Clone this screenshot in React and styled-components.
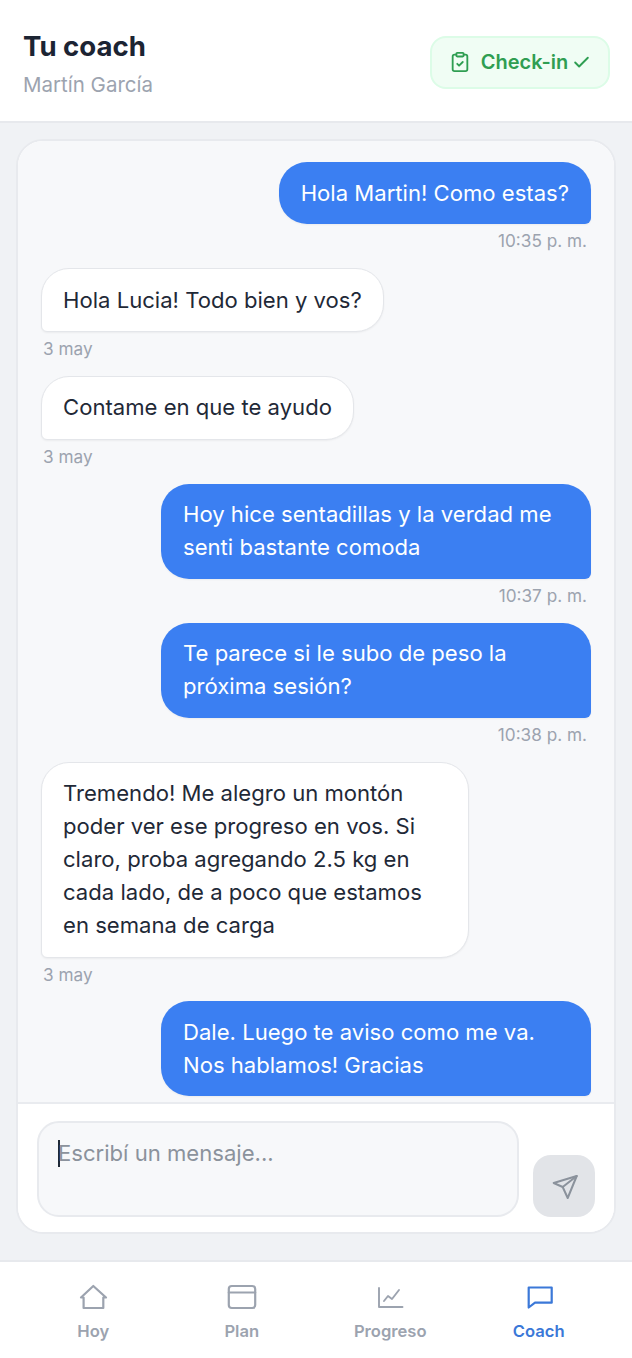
import React from "react";
import styled, { createGlobalStyle } from "styled-components";
import { ClipboardCheck, Check } from "lucide-react";

const GlobalStyle = createGlobalStyle`
  html, body { margin: 0; padding: 0; }
  body { font-family: Inter, "Liberation Sans", sans-serif; background: #f0f2f5; }
  * { box-sizing: border-box; }
`;

const Screen = styled.div`
  width: 632px;
  height: 1358px;
  display: flex;
  flex-direction: column;
  background: #f0f2f5;
`;

const Header = styled.header`
  height: 123px;
  flex: none;
  display: flex;
  align-items: center;
  justify-content: space-between;
  padding: 0 22px 0 23px;
  background: #fff;
  border-bottom: 2px solid #e7e9ed;
`;

const Heading = styled.div`
  padding-top: 6px;
`;

const Title = styled.h1`
  margin: 0;
  font-size: 27.6px;
  line-height: 36px;
  font-weight: 700;
  color: #1c2433;
`;

const Subtitle = styled.div`
  margin-top: 7px;
  font-size: 20.5px;
  line-height: 28px;
  color: #9ca3af;
`;

const CheckIn = styled.button`
  width: 180px;
  height: 53px;
  display: flex;
  align-items: center;
  justify-content: center;
  gap: 10px;
  margin-top: 4px;
  padding: 0 0 1px;
  font: 600 20px Inter, sans-serif;
  color: #2f9e52;
  background: #f0fdf4;
  border: 2px solid #dcfce7;
  border-radius: 16px;

  span {
    display: flex;
    align-items: center;
    gap: 4px;
  }
`;

const Main = styled.main`
  flex: 1;
  min-height: 0;
  padding: 16px 16px 26px;
  display: flex;
`;

const Card = styled.section`
  flex: 1;
  display: flex;
  flex-direction: column;
  overflow: hidden;
  background: #fff;
  border: 2px solid #e8eaee;
  border-radius: 27px;
`;

const Messages = styled.div`
  flex: 1;
  min-height: 0;
  overflow: hidden;
  display: flex;
  flex-direction: column;
  padding: 21.3px 23px 0;
  background: #f7f8fa;
  border-bottom: 2px solid #e9ebef;
`;

const Row = styled.div`
  display: flex;
  flex-direction: column;
  flex: none;
  align-items: ${(p) => (p.$mine ? "flex-end" : "flex-start")};
  margin-bottom: 15.85px;
`;

const Bubble = styled.div`
  max-width: ${(p) => (p.$mine ? "430px" : "428px")};
  padding: ${(p) => (p.$mine ? "14.5px 22px" : "14.5px 21px")};
  font-size: 22.1px;
  line-height: 33px;
  border-radius: ${(p) => (p.$mine ? "28px 28px 6px 28px" : "28px 28px 28px 6px")};
  color: ${(p) => (p.$mine ? "#fff" : "#1f2937")};
  background: ${(p) => (p.$mine ? "#3b7ff2" : "#fff")};
  border: ${(p) => (p.$mine ? "none" : "1px solid #e4e6ea")};
  box-shadow: 0 1px 2px rgba(0, 0, 0, 0.05);
`;

const Time = styled.div`
  margin-top: 6px;
  padding: 0 4px 0 2px;
  font-size: 17.2px;
  line-height: 22px;
  color: #9ca3af;
`;

const Composer = styled.form`
  flex: none;
  height: 128px;
  display: flex;
  align-items: flex-end;
  gap: 14px;
  margin: 0;
  padding: 16px 19px 15px 19px;
  background: #fff;
`;

const InputBox = styled.div`
  flex: 1;
  height: 96px;
  padding: 14px 19px;
  display: flex;
  align-items: flex-start;
  font-size: 22.1px;
  line-height: 33px;
  color: #8b929c;
  background: #f7f8fa;
  border: 2px solid #e8eaee;
  border-radius: 22px;
`;

const Caret = styled.i`
  width: 2px;
  height: 27px;
  margin-top: 3px;
  margin-right: -2px;
  background: #1f2937;
`;

const SendButton = styled.button`
  width: 62px;
  height: 62px;
  flex: none;
  display: flex;
  align-items: center;
  justify-content: center;
  padding: 0;
  color: #8b929c;
  background: #e2e4e8;
  border: none;
  border-radius: 18px;
`;

const Nav = styled.nav`
  flex: none;
  height: 98px;
  display: grid;
  grid-template-columns: repeat(4, 1fr);
  padding: 0 19px;
  background: #fff;
  border-top: 2px solid #e7e9ed;
`;

const NavItem = styled.div`
  display: flex;
  flex-direction: column;
  align-items: center;
  padding-top: 19px;
  gap: 7px;
  font-size: 16.6px;
  line-height: 22px;
  font-weight: 600;
  color: ${(p) => (p.$active ? "#3b78d8" : "#9ca3af")};
`;

const Glyph = ({ size = 32, width = 2.2, children }) => (
  <svg
    width={size}
    height={size}
    viewBox={`0 0 ${size} ${size}`}
    fill="none"
    stroke="currentColor"
    strokeWidth={width}
    strokeLinejoin="round"
    strokeLinecap="round"
  >
    {children}
  </svg>
);

const HomeIcon = () => (
  <Glyph>
    <path d="M4 16.5 16.3 5 29 16.5h-2.7V27H6.6V16.5Z" />
  </Glyph>
);

const PlanIcon = () => (
  <Glyph>
    <rect x="2.8" y="5" width="26.4" height="22" rx="3" />
    <path d="M2.8 11.5h26.4" />
  </Glyph>
);

const ProgressIcon = () => (
  <Glyph width={1.9}>
    <path d="M5 7v19h23.5" />
    <path d="M10 20l4-5 4 3 7-9" />
  </Glyph>
);

const CoachIcon = () => (
  <Glyph>
    <path d="M5.7 6.5h23v15.2H12L5.7 26.5Z" />
  </Glyph>
);

const SendIcon = () => (
  <Glyph size={27} width={2}>
    <path d="M25.7 3 2.7 10l9 4 5 11Z" />
    <path d="M25.7 3 11.7 14" />
  </Glyph>
);

const chat = [
  { mine: true, text: "Hola Martin! Como estas?", time: "10:35 p. m." },
  { text: "Hola Lucia! Todo bien y vos?", time: "3 may" },
  { text: "Contame en que te ayudo", time: "3 may" },
  { mine: true, text: "Hoy hice sentadillas y la verdad me senti bastante comoda", time: "10:37 p. m." },
  { mine: true, text: "Te parece si le subo de peso la próxima sesión?", time: "10:38 p. m." },
  { text: "Tremendo! Me alegro un montón poder ver ese progreso en vos. Si claro, proba agregando 2.5 kg en cada lado, de a poco que estamos en semana de carga", time: "3 may" },
  { mine: true, text: "Dale. Luego te aviso como me va. Nos hablamos! Gracias" },
];

const tabs = [
  { label: "Hoy", Icon: HomeIcon },
  { label: "Plan", Icon: PlanIcon },
  { label: "Progreso", Icon: ProgressIcon },
  { label: "Coach", Icon: CoachIcon, active: true },
];

export default function App() {
  return (
    <Screen>
      <GlobalStyle />
      <Header>
        <Heading>
          <Title>Tu coach</Title>
          <Subtitle>Martín García</Subtitle>
        </Heading>
        <CheckIn type="button">
          <ClipboardCheck size={22} strokeWidth={2} />
          <span>
            Check-in
            <Check size={19} strokeWidth={2.4} />
          </span>
        </CheckIn>
      </Header>
      <Main>
        <Card>
          <Messages>
            {chat.map((m, i) => (
              <Row key={i} $mine={m.mine}>
                <Bubble $mine={m.mine}>{m.text}</Bubble>
                {m.time && <Time>{m.time}</Time>}
              </Row>
            ))}
          </Messages>
          <Composer>
            <InputBox>
              <Caret />
              Escribí un mensaje...
            </InputBox>
            <SendButton type="button">
              <SendIcon />
            </SendButton>
          </Composer>
        </Card>
      </Main>
      <Nav>
        {tabs.map(({ label, Icon, active }) => (
          <NavItem key={label} $active={active}>
            <Icon />
            {label}
          </NavItem>
        ))}
      </Nav>
    </Screen>
  );
}
